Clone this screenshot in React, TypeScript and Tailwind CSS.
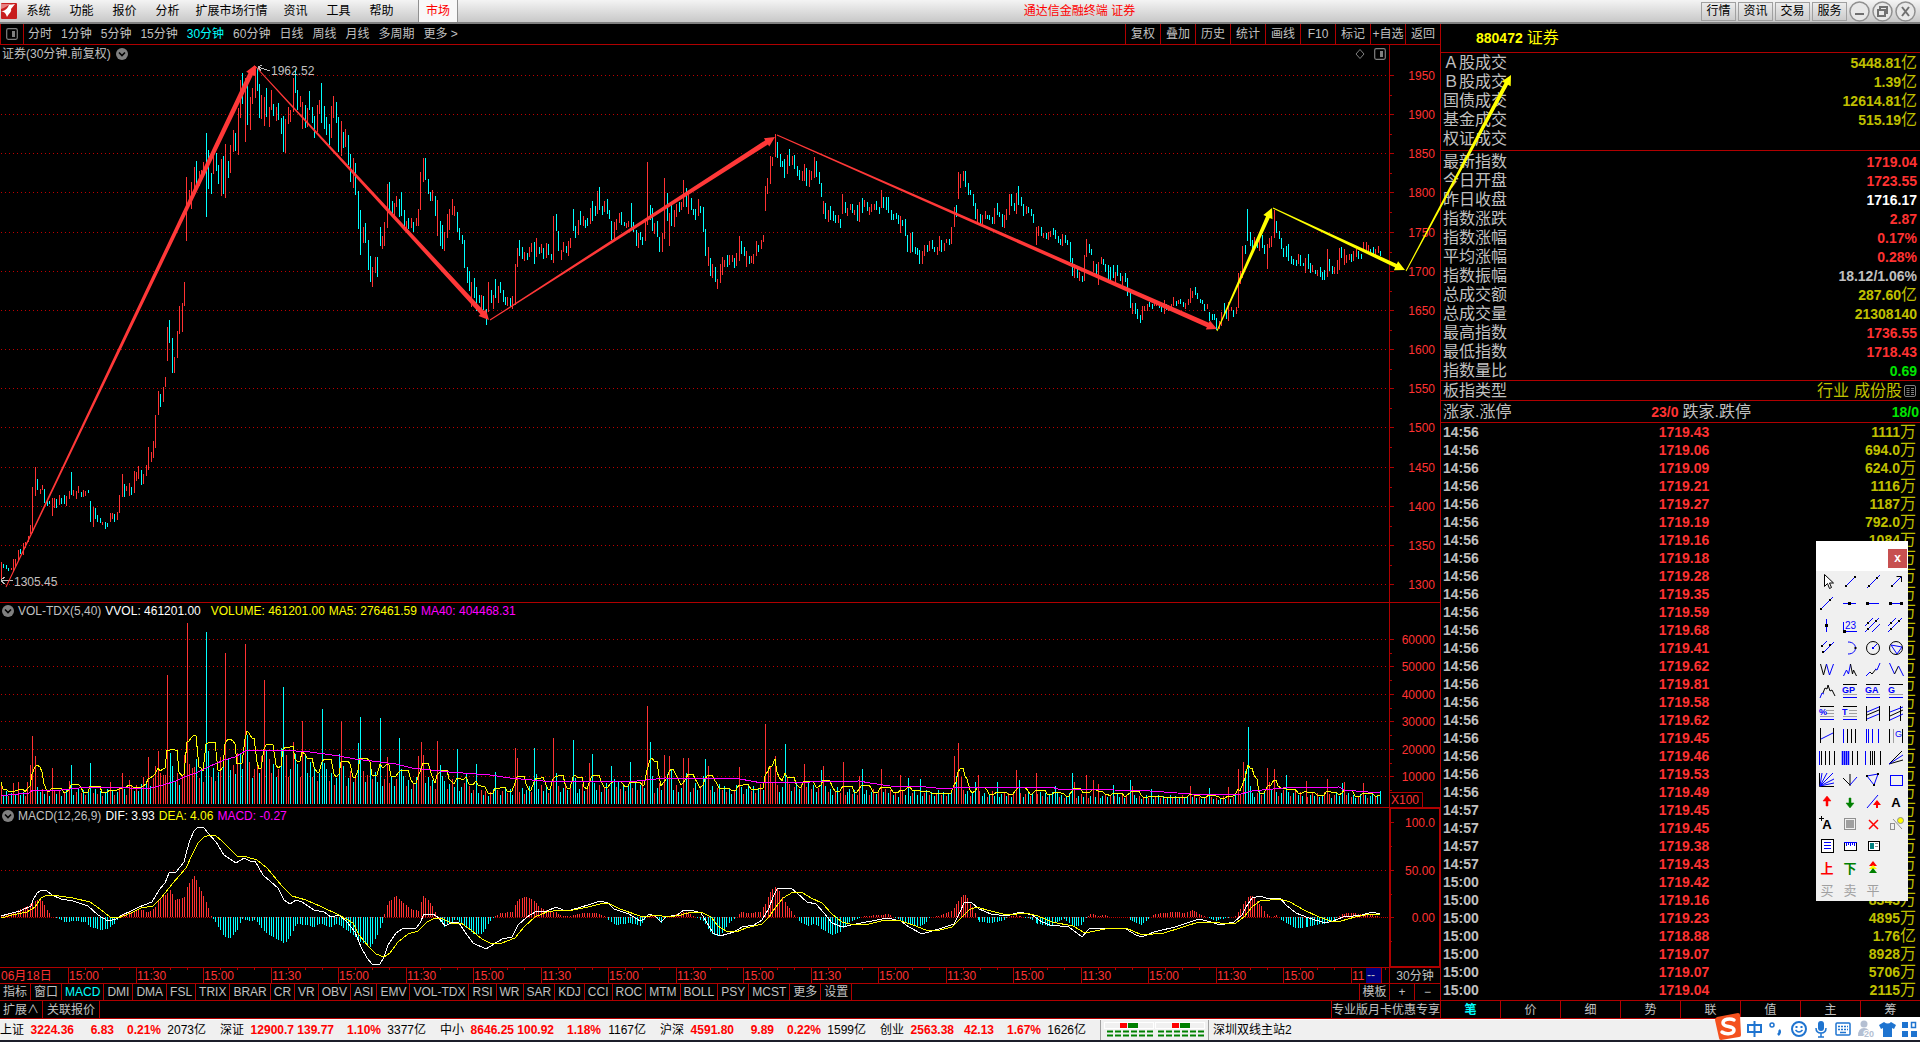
import type { ReactNode } from "react";

type Segment = { from: number; to: number; bars: string };
type Point = [number, number];

const RED = "#ff3232";
const CYAN = "#00ffff";
const LINE = "#b00000";

const menus = ["系统", "功能", "报价", "分析", "扩展市场行情", "资讯", "工具", "帮助"];
const periods = ["分时", "1分钟", "5分钟", "15分钟", "30分钟", "60分钟", "日线", "周线", "月线", "多周期", "更多 >"];
const chartTools = ["复权", "叠加", "历史", "统计", "画线", "F10", "标记", "+自选", "返回"];
const indicators = [
  "指标", "窗口", "MACD", "DMI", "DMA", "FSL", "TRIX", "BRAR", "CR", "VR", "OBV", "ASI", "EMV",
  "VOL-TDX", "RSI", "WR", "SAR", "KDJ", "CCI", "ROC", "MTM", "BOLL", "PSY", "MCST", "更多", "设置",
];
const sideTabs = ["笔", "价", "细", "势", "联", "值", "主", "筹"];

const turnover = [
  ["Ａ股成交", "5448.81亿"],
  ["Ｂ股成交", "1.39亿"],
  ["国债成交", "12614.81亿"],
  ["基金成交", "515.19亿"],
  ["权证成交", ""],
];

const stats = [
  ["最新指数", "1719.04", "text-[#ff3232]"],
  ["今日开盘", "1723.55", "text-[#ff3232]"],
  ["昨日收盘", "1716.17", "text-white"],
  ["指数涨跌", "2.87", "text-[#ff3232]"],
  ["指数涨幅", "0.17%", "text-[#ff3232]"],
  ["平均涨幅", "0.28%", "text-[#ff3232]"],
  ["指数振幅", "18.12/1.06%", "text-[#c0c0c0]"],
  ["总成交额", "287.60亿", "text-[#c0c000]"],
  ["总成交量", "21308140", "text-[#c0c000]"],
  ["最高指数", "1736.55", "text-[#ff3232]"],
  ["最低指数", "1718.43", "text-[#ff3232]"],
  ["指数量比", "0.69", "text-[#00e600]"],
];

const ticks = [
  ["14:56", "1719.43", "1111万"],
  ["14:56", "1719.06", "694.0万"],
  ["14:56", "1719.09", "624.0万"],
  ["14:56", "1719.21", "1116万"],
  ["14:56", "1719.27", "1187万"],
  ["14:56", "1719.19", "792.0万"],
  ["14:56", "1719.16", "1084万"],
  ["14:56", "1719.18", "913.0万"],
  ["14:56", "1719.28", "1042万"],
  ["14:56", "1719.35", "876.0万"],
  ["14:56", "1719.59", "1325万"],
  ["14:56", "1719.68", "1210万"],
  ["14:56", "1719.41", "954.0万"],
  ["14:56", "1719.62", "1093万"],
  ["14:56", "1719.81", "1178万"],
  ["14:56", "1719.58", "883.0万"],
  ["14:56", "1719.62", "902.0万"],
  ["14:56", "1719.45", "1016万"],
  ["14:56", "1719.46", "1254万"],
  ["14:56", "1719.53", "967.0万"],
  ["14:56", "1719.49", "1132万"],
  ["14:57", "1719.45", "1407万"],
  ["14:57", "1719.45", "215.0万"],
  ["14:57", "1719.38", "388.0万"],
  ["14:57", "1719.43", "146.0万"],
  ["15:00", "1719.42", "1562万"],
  ["15:00", "1719.16", "8343万"],
  ["15:00", "1719.23", "4895万"],
  ["15:00", "1718.88", "1.76亿"],
  ["15:00", "1719.07", "8928万"],
  ["15:00", "1719.07", "5706万"],
  ["15:00", "1719.04", "2115万"],
];

const quotes = [
  ["上证", "3224.36", "6.83", "0.21%", "2073亿"],
  ["深证", "12900.7", "139.77", "1.10%", "3377亿"],
  ["中小", "8646.25", "100.92", "1.18%", "1167亿"],
  ["沪深", "4591.80", "9.89", "0.22%", "1599亿"],
  ["创业", "2563.38", "42.13", "1.67%", "1626亿"],
];

// r = rising bar, c = falling bar, then high-low
const candles: Segment[] = [
  {
    from: 1,
    to: 165,
    bars: "r562-581 c564-568 c565-569 c568-571 r568-570 r559-572 r559-567 r550-561 c549-554 r543-555 r542-548 r536-542 r525-534 r487-533 r467-496 c479-490 r489-494 r485-490 c489-503 c501-506 c501-504 r498-516 r498-508 c499-508 r495-505 c498-504 c495-504 r496-506 r491-499 c472-495 r490-496 r491-499 r486-493 c492-497 r490-497 r491-496 c490-493 c501-522 r507-527 c508-519 c515-522 c518-523 r522-525 c522-529 c523-527 r513-522 r513-519 c514-522 r512-520 r495-513 r474-497 c484-497 r486-491 r483-496 c487-495 r471-493 r472-481 r466-479 c470-485 r474-484 r465-476 r447-470 r452-462 r441-458 r415-448 r391-415 c394-407 r387-402 r377-387",
  },
  {
    from: 167,
    to: 257,
    bars: "r327-361 c320-343 c338-373 r357-373 r331-358 r306-334 r303-332 r282-306 r177-241 r190-204 r182-209 r167-193 c161-184 r171-186 r170-180 r162-177 c133-217 c150-189 c173-194 r152-174 c153-171 c165-184 r159-196 c156-194 r144-198 c161-178 r145-173 r130-152 c133-151 r108-155 r80-118 c73-104 r78-142 c83-125 r97-130 r88-104 r66-98 c68-91",
  },
  {
    from: 259,
    to: 355,
    bars: "c84-118 r95-119 r97-126 c88-117 r107-127 r90-110 c104-116 r107-121 c103-120 c118-134 c116-152 r119-153 r107-124 r110-122 r78-112 c69-93 c90-110 r96-107 r102-129 c105-128 r108-127 c91-110 c107-123 c116-138 r105-132 r100-114 c83-123 c106-129 c117-135 c124-145 r106-138 r96-118 c102-123 c117-152 r121-156 c132-148 r129-147 c135-165 c154-182 r158-188 c163-195",
  },
  {
    from: 358,
    to: 454,
    bars: "c191-229 c210-255 r227-243 c223-243 c240-270 c256-282 r267-287 r257-273 c257-277 c227-246 r236-249 r222-246 r184-228 c182-210 c201-214 r203-216 r196-207 c199-217 c192-216 c210-228 r221-230 c218-229 r218-228 c222-232 r218-226 r209-226 r172-210 r158-182 c158-180 c179-194 c192-201 r190-201 c196-216 r200-236 c221-246 c225-249 r232-251 r214-238 r209-230 r199-215 r206-216",
  },
  {
    from: 457,
    to: 553,
    bars: "c212-232 c228-240 c235-244 c240-268 c267-283 c271-291 r282-307 c278-298 c287-311 c295-303 r295-312 c296-310 c309-325 r282-312 c290-303 r295-309 c279-298 r286-303 c282-293 c290-302 c297-305 r297-306 c298-307 r296-309 r264-305 r248-267 c240-256 c247-259 r252-261 c253-260 r247-257 r243-252 c242-264 r238-257 c247-254 r244-253 c248-259 r243-258 c244-255 c254-260 r216-263",
  },
  {
    from: 556,
    to: 638,
    bars: "c214-231 c231-251 r250-260 r242-252 c246-253 r241-256 r238-248 c209-231 c226-238 r220-235 c211-225 r216-226 c220-228 c218-226 r208-224 c201-221 c206-216 r191-214 c187-210 c206-215 r201-212 c199-214 c210-219 c221-240 r222-240 r219-230 r213-223 c212-225 c222-226 r223-228 r221-227 c203-230 c222-232 c230-246 r233-248",
  },
  {
    from: 640,
    to: 763,
    bars: "c232-240 c237-245 r220-241 r162-225 c205-220 c208-231 r223-234 c221-237 c237-252 r233-252 r178-239 c193-221 r213-246 c205-226 r210-227 r204-217 c202-212 r202-210 r180-207 c188-207 r194-214 c198-210 c209-215 c209-220 r199-216 c206-213 c207-232 c229-256 r247-266 c258-276 r264-278 c267-282 r279-289 r264-283 r257-275 r260-267 c255-267 r255-265 r255-262 c258-268 r253-266 r236-261 c241-254 c247-256 r251-267 c256-264 r256-263 r254-264 r241-256 c245-252 r240-249 r235-242",
  },
  {
    from: 765,
    to: 821,
    bars: "r186-211 r178-194 r156-184 r157-166 r134-157 c142-158 c154-167 c161-167 c159-178 r155-174 c149-166 r156-165 c155-169 c166-176 c170-180 r171-181 r164-181 c168-186 r170-187 r171-180 r157-178 c161-177 c172-184 c183-197",
  },
  {
    from: 823,
    to: 898,
    bars: "r201-214 c203-219 r210-222 c206-220 c211-221 c215-223 r215-223 c219-228 r194-214 c202-213 r208-216 r204-210 c204-213 r210-215 c205-221 r202-222 c198-213 r200-207 c202-211 r207-215 r204-212 r204-210 c201-210 c207-214 r190-208 c197-208 c197-210 c197-213 c210-220 c214-220 c213-219 c215-224",
  },
  {
    from: 900,
    to: 956,
    bars: "r216-233 c220-226 c219-236 c235-252 r233-253 c232-252 c247-254 c248-255 c250-264 r251-264 r245-256 c245-252 r241-251 c240-249 c247-252 r247-255 r236-251 c240-252 r243-251 r239-243 c239-245 r227-244 r207-227 c205-217",
  },
  {
    from: 958,
    to: 1033,
    bars: "r172-199 r174-188 r171-181 c171-187 c183-195 c190-195 c194-206 c203-219 r209-223 c214-224 r215-224 r211-219 c215-219 c215-220 c217-224 r208-224 c203-215 c212-217 c214-227 r215-228 r209-220 r194-215 c194-206 c203-211 r193-214 c186-205 c197-206 c204-216 r206-214 c207-213 c209-216 c214-223",
  },
  {
    from: 1036,
    to: 1127,
    bars: "r227-245 r226-236 c227-236 r233-238 c233-239 r232-240 r231-237 c228-235 c230-239 c236-243 c239-245 r234-246 c235-243 c240-245 c242-262 c258-276 r264-278 c267-278 r272-281 c276-282 r255-281 r239-257 c244-253 c249-255 r261-272 c264-274 r262-285 r257-264 c259-265 c264-272 c265-280 c267-280 c265-278 r272-283 c265-276 c273-281 r276-285 c273-282 c278-296",
  },
  {
    from: 1130,
    to: 1238,
    bars: "c293-308 r303-314 c303-314 c309-319 c315-323 r306-320 r306-311 r304-311 c302-307 c304-309 r300-306 r302-306 c302-308 c306-312 r300-314 c304-310 r305-311 r304-308 r297-306 c301-306 r300-304 c299-304 c302-307 r303-309 r299-305 r288-303 r291-298 c287-295 c293-299 c299-303 c300-304 c304-311 r304-309 c312-321 c314-320 c314-320 c318-330 r321-329 r312-326 c303-315 c309-319 r302-321 r307-311 c310-317 r307-314 r273-308",
  },
  {
    from: 1240,
    to: 1380,
    bars: "r271-284 r246-278 c245-254 c209-241 c232-246 c240-250 r237-247 c239-248 r236-251 c235-248 c245-254 r244-269 r238-248 r236-247 r210-238 c221-233 c231-239 c238-249 c248-257 c246-257 c244-261 c256-264 c259-265 c260-266 r254-264 c255-266 c263-266 r258-273 c254-269 c263-273 r265-272 c270-274 r270-276 c267-277 c272-280 c270-280 r249-277 c259-271 c266-274 r267-274 r260-274 r248-270 c247-258 r249-265 r255-263 r254-260 c254-262 r251-261 r249-257 c251-259 c254-259 r242-251 r242-250 r245-252 c249-253 c247-256 r249-255 r246-253 c251-256",
  },
];

// bars above the usual level: colour, x, height
const volumeSpikes =
  "r1:22 r13:21 r18:22 r27:22 r30:39 r32:68 r35:48 c37:17 r52:36 r54:14 r69:23 c71:39 c90:41 r110:22 r122:31 r129:24 r148:47 r155:38 r158:53 r163:29 r167:129 c170:51 c172:38 r184:49 r187:181 r189:40 r192:36 r194:37 c196:45 c206:172 c208:53 r220:47 c223:48 r225:151 c228:45 r233:39 r237:51 c240:51 r245:160 c247:69 r249:42 r257:39 r261:48 r264:124 c266:54 r269:45 c281:56 c283:117 r286:49 r293:62 c295:50 r302:83 c305:48 c310:42 c322:95 c324:41 c339:50 r341:83 c343:38 c358:61 c360:87 c370:37 c380:86 r387:47 c399:66 c401:35 r418:48 r421:62 r423:49 r437:63 c440:39 c442:28 c457:55 c466:31 c476:40 c495:32 r515:56 r517:46 c534:56 c536:30 r553:66 c556:31 c573:64 c575:26 r589:41 c592:50 c611:38 c614:25 c630:42 r647:98 c650:62 c652:28 r664:49 c667:30 r669:48 c671:34 r683:46 c686:31 r688:46 c703:28 c705:45 r708:38 r739:37 r765:80 r768:37 r770:37 r775:48 c785:60 r787:26 r804:40 c821:34 r823:38 r843:42 r859:28 c862:35 r881:35 r900:29 c908:26 c920:25 r954:48 c956:28 r958:61 r961:27 c975:22 r978:29 c997:22 r1016:34 c1019:24 r1036:31 c1055:18 c1072:31 r1074:22 r1086:29 r1093:24 r1098:20 c1113:19 c1130:24 r1132:18 c1151:15 r1190:18 c1209:16 r1228:17 r1238:35 r1241:27 r1243:42 c1245:33 c1248:77 c1250:18 r1267:36 r1269:22 r1274:35 c1286:29 r1306:23 r1327:25 c1342:21 r1344:22 r1363:21 c1380:13";

const ma40: Point[] = [
  [1, 795], [8, 795], [29, 793], [33, 790], [61, 790], [88, 787], [127, 787], [133, 789], [151, 788], [163, 785],
  [176, 781], [184, 777], [196, 773], [208, 767], [224, 760], [235, 757], [247, 750], [282, 750], [310, 752],
  [339, 756], [355, 759], [380, 762], [396, 764], [412, 768], [449, 772], [490, 775], [510, 778], [543, 781],
  [567, 782], [596, 781], [637, 781], [665, 778], [740, 779], [762, 783], [859, 781], [870, 783], [890, 786],
  [926, 787], [946, 789], [961, 787], [1051, 787], [1058, 789], [1099, 789], [1114, 790], [1150, 791],
  [1191, 794], [1237, 795], [1252, 791], [1283, 788], [1339, 787], [1344, 790], [1380, 793],
];

const dif =
  "1,916 8,914 20,911 31,906 33,900 37,893 42,890 47,891 52,895 61,899 73,901 88,906 98,915 108,921 116,919 122,915 131,911 139,907 152,902 159,890 165,883 169,873 176,872 184,862 187,850 190,840 194,831 198,827 204,828 208,833 216,842 224,855 236,863 244,858 250,861 255,861 263,875 278,888 284,900 290,904 296,900 302,902 314,910 324,912 331,917 339,915 347,922 355,932 361,947 367,958 372,964 380,964 384,957 388,945 396,933 402,929 416,928 420,923 424,914 433,914 439,918 445,926 453,922 459,923 465,932 473,943 486,949 494,944 502,939 512,937 518,925 527,917 535,912 547,911 556,907 563,910 571,910 588,905 600,901 608,903 614,909 629,914 640,921 644,919 649,914 655,916 661,922 666,917 677,915 684,910 691,910 701,913 709,926 713,933 720,936 734,932 742,927 754,925 762,920 769,908 773,897 777,889 783,888 791,888 797,893 807,902 816,904 824,913 832,923 842,927 856,924 877,920 887,918 901,921 909,927 922,934 942,928 954,924 960,912 964,903 971,902 979,909 991,914 1007,916 1020,912 1032,915 1042,922 1050,925 1069,927 1082,937 1089,929 1103,928 1126,929 1136,935 1142,937 1154,932 1175,927 1199,919 1211,922 1220,925 1234,922 1242,915 1246,907 1252,898 1260,896 1269,899 1280,898 1286,905 1296,913 1309,918 1325,923 1333,921 1343,917 1353,916 1362,915 1372,912 1380,914";
const dea =
  "1,918 12,915 27,912 35,907 41,898 47,895 59,896 73,898 90,902 100,909 110,917 118,918 131,913 141,908 153,906 161,898 173,883 186,868 192,855 198,843 204,837 210,835 216,836 222,841 231,850 237,856 247,857 257,860 267,868 282,886 292,896 306,900 322,907 339,915 353,923 359,935 369,947 376,954 384,957 390,953 398,942 408,934 418,931 427,922 435,918 443,919 451,923 461,923 471,930 482,939 492,944 502,943 515,938 524,927 535,917 547,912 559,910 573,910 588,907 604,903 610,904 620,909 640,916 646,917 654,915 669,917 681,915 691,912 703,913 711,917 718,926 726,931 736,932 746,928 762,924 769,917 775,908 783,898 793,892 803,893 811,898 822,903 832,914 842,922 850,924 869,924 885,920 901,921 913,925 926,930 940,930 952,927 960,919 969,910 976,907 991,911 1007,915 1026,913 1038,916 1052,922 1073,926 1085,933 1105,929 1126,928 1142,935 1164,933 1183,927 1199,922 1220,923 1236,923 1244,917 1252,907 1260,901 1280,899 1290,902 1304,910 1319,917 1331,921 1341,921 1355,917 1370,914 1380,914";
const macdShape =
  "1,2 14,5 31,13 38,18 42,16 46,8 50,2 52,0 56,-1 64,-5 75,-4 85,-5 90,-10 100,-13 108,-12 116,-5 119,1 127,4 139,8 147,5 154,8 159,18 165,22 170,27 175,17 184,20 188,33 194,41 199,30 206,15 210,3 213,-2 218,-10 224,-20 230,-21 237,-13 242,-2 250,-4 256,-3 262,-13 272,-20 282,-25 285,-27 291,-18 296,-7 305,-8 314,-10 320,-6 330,-11 337,-6 344,-12 352,-17 360,-25 370,-30 376,-20 382,-6 384,3 388,15 396,21 402,15 410,8 418,6 423,21 429,16 435,5 440,-5 444,-10 450,-6 456,-2 464,-9 474,-18 482,-17 490,-4 494,0 499,4 512,5 518,18 525,20 533,17 540,9 550,5 556,5 561,1 570,1 582,4 596,4 605,1 610,-5 616,-8 630,-6 640,-9 645,-2 649,3 655,0 661,-6 666,0 677,3 685,5 691,2 697,-1 704,-5 710,-15 716,-20 722,-16 728,-7 735,-1 741,5 750,4 760,5 766,15 771,27 776,31 781,22 787,11 795,1 800,-5 807,-9 815,-7 824,-14 833,-18 840,-15 848,-5 857,-2 864,1 880,2 887,3 895,-1 905,-6 917,-10 924,-7 929,-1 940,2 952,6 958,16 964,23 968,17 974,6 979,-5 990,-6 1002,-4 1008,0 1015,2 1022,0 1030,-2 1037,-7 1050,-9 1057,-5 1064,-2 1072,-9 1080,-9 1085,-2 1091,4 1097,1 1105,2 1111,0 1126,0 1133,-5 1141,-8 1147,-3 1155,3 1173,5 1185,4 1193,7 1200,2 1207,0 1215,-4 1225,-1 1234,0 1240,8 1246,18 1251,22 1257,16 1265,5 1270,0 1276,2 1280,-3 1286,-6 1294,-11 1303,-11 1315,-8 1328,-6 1335,-2 1341,3 1350,4 1360,3 1370,3 1375,1 1380,0";

const toPoints = (s: string) => s.split(" ").map((p) => p.split(",").map(Number) as Point);

const valueAt = (points: Point[], x: number) => {
  for (let i = 1; i < points.length; i++) {
    const [x0, y0] = points[i - 1];
    const [x1, y1] = points[i];
    if (x <= x1) return y0 + ((y1 - y0) * Math.max(0, x - x0)) / (x1 - x0);
  }
  return points[points.length - 1][1];
};

const usualVolume: Point[] = [
  [0, 10], [40, 12], [60, 11], [130, 13], [150, 24], [170, 28], [240, 33], [310, 30], [370, 25],
  [450, 20], [480, 12], [520, 14], [640, 18], [720, 15], [800, 17], [850, 12], [1000, 10], [1100, 8],
  [1220, 6], [1260, 11], [1310, 10], [1380, 7],
];

const BAR_STEP = 2.41;
const BAR_COUNT = 573;

const volumes = Array.from({ length: BAR_COUNT }, (_, i) => {
  const x = Math.round(1 + i * BAR_STEP);
  const noise = ((i * 7919) % 101) / 101;
  return {
    x,
    h: Math.round(valueAt(usualVolume, x) * (0.65 + noise * 0.7)),
    color: (i * 31) % 7 < 3 ? RED : CYAN,
  };
});
volumeSpikes.split(" ").forEach((s) => {
  const [x, h] = s.slice(1).split(":").map(Number);
  const bar = volumes[Math.min(BAR_COUNT - 1, Math.round((x - 1) / BAR_STEP))];
  bar.x = x;
  bar.h = h;
  bar.color = s[0] === "r" ? RED : CYAN;
});

const ma5 = volumes.map((v, i) => {
  const part = volumes.slice(Math.max(0, i - 4), i + 1);
  const mean = part.reduce((sum, p) => sum + p.h, 0) / part.length;
  return `${v.x},${Math.round(804 - mean)}`;
});

const priceLevels = Array.from({ length: 14 }, (_, i) => ({ label: 1950 - i * 50, y: Math.round(75 + i * 39.15) }));
const volumeLevels = [60000, 50000, 40000, 30000, 20000, 10000].map((label, i) => ({
  label,
  y: Math.round(639 + i * 27.4),
}));
const timeMarks = Array.from({ length: 20 }, (_, i) => ({
  label: i === 19 ? "11" : i % 2 === 0 ? "15:00" : "11:30",
  x: Math.round(68 + i * 67.5),
}));

function GridLine({ y }: { y: number }) {
  return <line x1="1" x2="1389" y1={y + 0.5} y2={y + 0.5} stroke="#c00000" strokeDasharray="1 3" />;
}

function PriceChart() {
  return (
    <svg className="block h-[539px] w-full" viewBox="0 63 1389 539" preserveAspectRatio="none" shapeRendering="crispEdges">
      {priceLevels.map((l) => (
        <GridLine key={l.label} y={l.y} />
      ))}
      {candles.map((seg) => {
        const bars = seg.bars.split(" ");
        return bars.map((b, i) => {
          const [high, low] = b.slice(1).split("-").map(Number);
          const x = Math.round(seg.from + ((seg.to - seg.from) * i) / (bars.length - 1));
          return <rect key={`${seg.from}-${i}`} x={x} y={high} width="1" height={low - high} fill={b[0] === "r" ? RED : CYAN} />;
        });
      })}
      <g fill="none" stroke="#c0c0c0">
        <path d="M258 67l12 4M258 67l4-2M258 67l3 4" />
        <path d="M1 580.5h12M1 580l4-3M1 581l4 3" />
      </g>
      <g fill="#c0c0c0" fontSize="12">
        <text x="271" y="75">1962.52</text>
        <text x="14" y="586">1305.45</text>
      </g>
    </svg>
  );
}

function VolumeChart() {
  return (
    <svg className="block h-[186px] w-full" viewBox="0 621 1389 186" preserveAspectRatio="none" shapeRendering="crispEdges">
      {volumeLevels.map((l) => (
        <GridLine key={l.label} y={l.y} />
      ))}
      {volumes.map((v, i) => (
        <rect key={i} x={v.x} y={804 - v.h} width="1" height={v.h} fill={v.color} />
      ))}
      <polyline points={ma5.join(" ")} fill="none" stroke="#ffff00" />
      <polyline points={ma40.join(" ")} fill="none" stroke="#ff00ff" />
    </svg>
  );
}

function MacdChart() {
  const shape = toPoints(macdShape);
  return (
    <svg className="block h-[141px] w-full" viewBox="0 826 1389 141" preserveAspectRatio="none" shapeRendering="crispEdges">
      <GridLine y={870} />
      <line x1="1" x2="1389" y1="917.5" y2="917.5" stroke="#c00000" strokeDasharray="1 1" />
      {volumes.map(({ x }, i) => {
        const h = Math.round(valueAt(shape, x));
        if (h === 0) return null;
        return <rect key={i} x={x} y={h > 0 ? 917 - h : 917} width="1" height={Math.abs(h)} fill={h > 0 ? RED : CYAN} />;
      })}
      <polyline points={dif} fill="none" stroke="#ffffff" />
      <polyline points={dea} fill="none" stroke="#ffff00" />
    </svg>
  );
}

function PriceAxis() {
  return (
    <svg className="block h-[557px] w-[50px]" viewBox="0 45 50 557">
      {priceLevels.map((l) => (
        <g key={l.label}>
          <path d={`M0 ${l.y + 0.5}h4M0 ${l.y + 20.5}h2`} stroke={LINE} />
          <text x="45" y={l.y + 5} fontSize="12" textAnchor="end" fill={RED}>{l.label}</text>
        </g>
      ))}
    </svg>
  );
}

function VolumeAxis() {
  return (
    <svg className="block h-[204px] w-[50px]" viewBox="0 603 50 204">
      {volumeLevels.map((l) => (
        <g key={l.label}>
          <path d={`M0 ${l.y + 0.5}h4M0 ${l.y + 14.5}h2`} stroke={LINE} />
          <text x="45" y={l.y + 5} fontSize="12" textAnchor="end" fill={RED}>{l.label}</text>
        </g>
      ))}
      <path d="M0 792.5h32.5V807" fill="none" stroke={LINE} />
      <text x="1" y="804" fontSize="12" fill={RED}>X100</text>
    </svg>
  );
}

function MacdAxis() {
  return (
    <svg className="block h-[159px] w-[50px]" viewBox="0 808 50 159">
      <rect x="0.5" y="808.5" width="49" height="158" fill="none" stroke={LINE} />
      {[["100.0", 822], ["50.00", 870], ["0.00", 917]].map(([label, y]) => (
        <g key={label}>
          <path d={`M0 ${Number(y) + 0.5}h4M0 ${Number(y) + 24.5}h2`} stroke={LINE} />
          <text x="45" y={Number(y) + 5} fontSize="12" textAnchor="end" fill={RED}>{label}</text>
        </g>
      ))}
    </svg>
  );
}

function Chevron() {
  return (
    <svg className="size-3" viewBox="0 0 12 12">
      <circle cx="6" cy="6" r="6" fill="#808080" />
      <path d="M3 4.5l3 3 3-3" fill="none" stroke="#000" strokeWidth="1.6" />
    </svg>
  );
}

function PanelIcon() {
  return (
    <svg className="size-3" viewBox="0 0 12 12">
      <rect x="0.7" y="0.7" width="10.6" height="10.6" rx="1.5" fill="none" stroke="#808080" strokeWidth="1.2" />
      <rect x="6" y="3" width="3" height="6" fill="#808080" />
    </svg>
  );
}

// trend arrow that widens towards its head
function Arrow({ from, to, color, width }: { from: Point; to: Point; color: string; width: number }) {
  const dx = to[0] - from[0];
  const dy = to[1] - from[1];
  const len = Math.hypot(dx, dy);
  const [ux, uy] = [dx / len, dy / len];
  const at = (along: number, side: number) => `${from[0] + ux * along - uy * side},${from[1] + uy * along + ux * side}`;
  const neck = len - 10;
  return (
    <polygon
      fill={color}
      points={[
        at(0, 0.5), at(neck, width / 2), at(neck, 5), at(len, 0),
        at(neck, -5), at(neck, -width / 2), at(0, -0.5),
      ].join(" ")}
    />
  );
}

function TrendArrows() {
  return (
    <svg className="pointer-events-none absolute inset-x-0 top-0 h-[602px] w-full" viewBox="0 0 1920 602" preserveAspectRatio="none">
      <Arrow from={[6, 587]} to={[255, 65]} color="#ff3838" width={5} />
      <Arrow from={[256, 67]} to={[489, 320]} color="#ff3838" width={5} />
      <Arrow from={[490, 320]} to={[775, 137]} color="#ff3838" width={5} />
      <Arrow from={[777, 135]} to={[1217, 329]} color="#ff3838" width={5} />
      <Arrow from={[1217, 331]} to={[1272, 208]} color="#ffff00" width={4} />
      <Arrow from={[1273, 208]} to={[1405, 270]} color="#ffff00" width={4} />
      <Arrow from={[1406, 271]} to={[1511, 75]} color="#ffff00" width={4} />
    </svg>
  );
}

function Dot({ x, y, size = 2 }: { x: number; y: number; size?: number }) {
  return <rect x={x - size / 2} y={y - size / 2} width={size} height={size} fill="#000" stroke="none" />;
}

function LevelLines({ text, short = false }: { text: string; short?: boolean }) {
  return (
    <>
      <path d="M4 3.5h14" stroke="#000" />
      <path d="M4 16.5h14" />
      <path d={short ? "M10 7.5h8M10 10.5h8M4 13.5h14" : "M4 13.5h14"} stroke="#a0a0a0" />
      <text x="3" y="12" fontSize="9" fontWeight="bold" fill="#00f" stroke="none">{text}</text>
    </>
  );
}

function Glyph({ text, color, bold = false }: { text: string; color: string; bold?: boolean }) {
  return (
    <text x="11" y="16" fontSize="13" textAnchor="middle" fontWeight={bold ? "bold" : "normal"} fill={color} stroke="none">
      {text}
    </text>
  );
}

const tools: { name: string; icon: ReactNode }[] = [
  { name: "选择", icon: <path d="M8.5 3.5v12l3-3 2 5 2-1-2-4.5h4z" fill="#fff" stroke="#000" /> },
  { name: "线段", icon: <><path d="M7 15l9-9" /><Dot x={7} y={15} /><Dot x={16} y={6} /></> },
  { name: "直线", icon: <><path d="M5 17L18 4" /><Dot x={7} y={15} /><Dot x={15} y={7} /></> },
  { name: "箭头", icon: <><path d="M7 15l9-9" /><path d="M11.5 5.5h5V11" stroke="#000" /><Dot x={7} y={15} /></> },
  { name: "射线", icon: <><path d="M5 16L17 4" /><Dot x={5} y={16} /><Dot x={14} y={7} /></> },
  { name: "水平直线", icon: <><path d="M4 10.5h13" /><Dot x={10.5} y={10.5} size={3} /></> },
  { name: "水平射线", icon: <><path d="M5 10.5h12" /><Dot x={5.5} y={10.5} size={3} /></> },
  { name: "水平线段", icon: <><path d="M5 10.5h12" /><Dot x={5.5} y={10.5} size={3} /><Dot x={16.5} y={10.5} size={3} /></> },
  { name: "垂直线", icon: <><path d="M10.5 4v13" /><Dot x={10.5} y={10.5} size={3} /></> },
  {
    name: "价格标注",
    icon: <><path d="M4.5 7v9.5H18" /><text x="6" y="14" fontSize="10" fill="#00f" stroke="none">23</text><Dot x={5.5} y={16.5} size={3} /></>,
  },
  { name: "平行线", icon: <><path d="M3 11l8-8M3 17L17 3M10 17l8-8" /><Dot x={6} y={8} /><Dot x={14} y={6} /><Dot x={6} y={14} /></> },
  { name: "通道线", icon: <><path d="M3 11l8-8M3 17L17 3" /><Dot x={6} y={8} /><Dot x={14} y={6} /><Dot x={6} y={14} /></> },
  { name: "平行线段", icon: <><path d="M6 9l5-5M7 16L18 5" /><Dot x={6} y={9} /><Dot x={7} y={15} /><Dot x={14} y={8} /></> },
  { name: "圆弧", icon: <><path d="M9 5c10 0 10 12 0 12" /><Dot x={16.5} y={11} /></> },
  { name: "圆", icon: <><circle cx="11" cy="11" r="6.5" fill="none" stroke="#000" /><path d="M11 11l4-4" /><path d="M10 12h2v-2h-2z" fill="#00f" stroke="none" /></> },
  { name: "外接圆", icon: <><circle cx="11" cy="11" r="6.5" fill="none" stroke="#000" /><path d="M6 8l11 2-5 7z" /></> },
  { name: "W浪", icon: <><path d="M4.5 5l3 11 3-11" stroke="#000" /><path d="M10.5 5l3 11 4-11" /></> },
  { name: "三浪", icon: <><path d="M4.5 17l3-6 2 4 2-10" /><path d="M11.5 5l2 10 1-4 3 6" stroke="#000" /></> },
  { name: "上升浪", icon: <><path d="M4 17l4-4" /><path d="M8 13l2 2 4-5" stroke="#000" /><path d="M13 10l2 1 3-7" /></> },
  { name: "下降浪", icon: <><path d="M4.5 4l5 11" /><path d="M9.5 15l4-8" stroke="#000" /><path d="M13.5 7l5 10" /></> },
  { name: "八浪", icon: <><path d="M4 17l2-5 2 1" /><path d="M7 12l2-5 2 1 1-4 2 6 2-1 3 6" stroke="#000" /></> },
  { name: "黄金价位", icon: <LevelLines text="GP" /> },
  { name: "黄金目标", icon: <LevelLines text="GA" /> },
  { name: "黄金分割", icon: <LevelLines text="G" /> },
  { name: "百分比", icon: <LevelLines text="%" short /> },
  { name: "波段线", icon: <LevelLines text="T" short /> },
  { name: "线性回归", icon: <><path d="M4.5 3v15M17.5 3v15" stroke="#000" /><path d="M5 9l12-5M5 16l12-5" /><path d="M5 12l12-5" stroke="#000" /></> },
  { name: "延长回归", icon: <><path d="M4.5 3v15M15.5 3v15" stroke="#000" /><path d="M5 9l13-5M5 17l13-6" /><path d="M5 13l13-6" stroke="#000" /></> },
  { name: "回归线", icon: <><path d="M4.5 3v15M17.5 3v15" stroke="#000" /><path d="M5 14l12-6" /></> },
  { name: "周期线", icon: <><path d="M4.5 4v14" /><path d="M8.5 4v14M12.5 4v14M16.5 4v14" stroke="#000" /></> },
  { name: "斐波周期", icon: <path d="M4.5 4v14M6.5 4v14M10.5 4v14M16.5 4v14" /> },
  {
    name: "黄金周期",
    icon: <><path d="M4.5 4v14M17.5 4v14" stroke="#000" /><path d="M8.5 4v14" stroke="#a0a0a0" /><text x="10" y="12" fontSize="9" fill="#00f" stroke="none">G</text></>,
  },
  { name: "阻速周期", icon: <><path d="M3.5 4v14" /><path d="M5.5 4v14M9.5 4v14M13.5 4v14M18.5 4v14" stroke="#000" /></> },
  { name: "密集周期", icon: <><path d="M3.5 4v14M5.5 4v14M7.5 4v14M9.5 4v14" strokeWidth="1.5" /><path d="M13.5 4v14M18.5 4v14" stroke="#000" /></> },
  { name: "对称周期", icon: <><path d="M3.5 4v14" /><path d="M8.5 4v14M10.5 4v14M12.5 4v14M18.5 4v14" stroke="#000" /></> },
  { name: "阻速线", icon: <><path d="M4 17L17 4M4 17l14-4" stroke="#000" /><path d="M4 17l14-9" /></> },
  { name: "甘氏线", icon: <><path d="M3.5 4v13.5H18" stroke="#000" /><path d="M4 17L6 4M4 17l7-13M4 17L17 4M4 17l14-7M4 17l14-3" /></> },
  { name: "分叉线", icon: <><path d="M11 5v12M4 9l7 7" stroke="#000" /><path d="M11 16l7-8" /></> },
  { name: "三角形", icon: <><path d="M5 7l11-2-4 11z" /><Dot x={5} y={7} /><Dot x={16} y={5} /><Dot x={12} y={16} /></> },
  { name: "矩形", icon: <rect x="5.5" y="6.5" width="12" height="10" fill="none" /> },
  { name: "上涨标记", icon: <path d="M11 5l4 5h-3v5h-2v-5H7z" fill="#f00" stroke="#f00" strokeWidth="0.5" /> },
  { name: "下跌标记", icon: <path d="M11 17l4-5h-3V7h-2v5H7z" fill="#008000" stroke="#008000" strokeWidth="0.5" /> },
  { name: "涨跌标记", icon: <><path d="M5 17L16 4" /><path d="M15 9l4 5h-3v3h-2v-3h-3z" fill="#f00" stroke="none" /></> },
  { name: "文字", icon: <Glyph text="A" color="#000" bold /> },
  { name: "锚定文字", icon: <><Glyph text="A" color="#000" bold /><path d="M3 5.5h5M5.5 3v5" stroke="#000" /></> },
  { name: "隐藏", icon: <><rect x="5.5" y="5.5" width="11" height="11" fill="none" stroke="#909090" /><rect x="7" y="7" width="8" height="8" fill="#a0a0a0" stroke="none" /></> },
  { name: "删除", icon: <path d="M7 7l9 9M16 7l-9 9" stroke="#f00" strokeWidth="1.5" /> },
  {
    name: "全部删除",
    icon: <><rect x="5.5" y="10.5" width="4" height="6" fill="none" stroke="#909090" /><path d="M8 6l9 10" stroke="#909090" /><circle cx="15.5" cy="7.5" r="3" fill="#ff0" stroke="#909090" /></>,
  },
  { name: "画线管理", icon: <><rect x="5.5" y="4.5" width="12" height="13" fill="#fff" stroke="#000" /><path d="M8 7.5h7M8 10.5h7M8 13.5h7" /></> },
  { name: "尺子", icon: <><rect x="5.5" y="7.5" width="12" height="8" fill="#fff" stroke="#000" /><path d="M5 7.5h13M7.5 8v3M9.5 8v2M11.5 8v3M13.5 8v2M15.5 8v3" /></> },
  { name: "截图", icon: <><rect x="6.5" y="6.5" width="11" height="9" fill="#fff" stroke="#000" /><rect x="8" y="8" width="4" height="6" fill="#008080" stroke="none" /><path d="M13 8.5h3M13 11.5h3" stroke="#909090" /></> },
  { name: "", icon: null },
  { name: "上标", icon: <Glyph text="上" color="#f00" bold /> },
  { name: "下标", icon: <Glyph text="下" color="#008000" bold /> },
  { name: "涨跌", icon: <><path d="M11 4l4 5H7z" fill="#f00" stroke="none" /><path d="M11 8l4 4H7z" fill="#ff0" stroke="none" /><path d="M11 11l4 5H7z" fill="#008000" stroke="none" /></> },
  { name: "", icon: null },
  { name: "买", icon: <Glyph text="买" color="#a0a0a0" /> },
  { name: "卖", icon: <Glyph text="卖" color="#a0a0a0" /> },
  { name: "平", icon: <Glyph text="平" color="#a0a0a0" /> },
];

function DrawingTools() {
  return (
    <div className="absolute top-[541px] right-3 h-[360px] w-[92px] bg-[#f0f0f0]">
      <div className="flex h-[30px] items-center justify-end bg-white pt-2 pr-px pb-1">
        <button aria-label="关闭" className="flex size-[19px] items-center justify-center bg-[#c75050] text-xs leading-none font-bold text-white">
          x
        </button>
      </div>
      <div className="grid grid-cols-4">
        {tools.map((t, i) =>
          t.icon ? (
            <button key={i} aria-label={t.name} className="h-[22px]">
              <svg className="block size-[22px]" viewBox="0 0 22 22" fill="none" stroke="#0000ff">
                {t.icon}
              </svg>
            </button>
          ) : (
            <span key={i} />
          ),
        )}
      </div>
    </div>
  );
}

function ImeBar() {
  return (
    <div className="absolute right-0 bottom-[2px] flex h-[23px] w-[198px] items-center bg-white text-[#1f74d0]">
      <svg className="absolute -left-2 bottom-0 h-7 w-7" viewBox="0 0 28 28">
        <path d="M3 5L24 1q2 0 2 2l1 20q0 2-2 2L7 28q-2 0-2-2L1 8q0-2 2-3z" fill="#f4511e" />
        <path d="M20 8c-4-2-11-1-11 3 0 5 11 2 11 7 0 4-8 5-12 2" fill="none" stroke="#fff" strokeWidth="3.5" strokeLinecap="round" />
      </svg>
      <svg className="block h-[22px] w-full" viewBox="0 0 198 22" fill="none" stroke="#1f74d0" strokeWidth="2">
        <path d="M26 7h13v7H26zM32.5 3v16" />
        <circle cx="50" cy="7" r="2" strokeWidth="1.5" />
        <path d="M57 12q2 2-1 5" strokeWidth="2.5" />
        <circle cx="77" cy="11" r="7" />
        <path d="M73.5 12q3.5 4 7 0" strokeWidth="1.5" />
        <path d="M74.5 8v2M79.5 8v2" />
        <rect x="96" y="3" width="6" height="10" rx="3" fill="#1f74d0" stroke="none" />
        <path d="M94 10q0 5 5 5t5-5M99 15v4M96 19h6" strokeWidth="1.5" />
        <rect x="114" y="5" width="14" height="12" rx="1" strokeWidth="1.5" />
        <path d="M116 8.5h10M116 11.5h10" strokeDasharray="2 1" strokeWidth="1.5" />
        <path d="M118 14.5h6" strokeWidth="1.5" />
        <g fill="#b4bfd2" stroke="none">
          <circle cx="142" cy="6" r="3.5" />
          <path d="M136 18q0-8 6-8t6 8z" />
          <text x="142" y="19" fontSize="9" fontWeight="bold" stroke="#fff" strokeWidth="2" paintOrder="stroke">20</text>
        </g>
        <path d="M162 4l-5 3 2 4 2-1v9h9v-9l2 1 2-4-5-3q-3 3-7 0z" fill="#1f74d0" stroke="none" />
        <path d="M180 4h6v6h-6zM180 13h6v6h-6zM189 13h6v6h-6z" fill="#1f74d0" stroke="none" />
        <path d="M189.5 4.5h4v5h-4z" strokeWidth="1.5" />
      </svg>
    </div>
  );
}

// numbers are bold 14px, a trailing unit is a plain 16px character
function Amount({ value }: { value: string }) {
  const unit = /[亿万]$/.test(value) ? value.slice(-1) : "";
  const digits = unit ? value.slice(0, -1) : value;
  return (
    <>
      <span className="text-sm font-bold">{digits}</span>
      {unit && <span className="text-base">{unit}</span>}
    </>
  );
}

function QuoteRow({ label, value, color }: { label: string; value: string; color: string }) {
  return (
    <tr className="h-[19px]">
      <th scope="row" className="p-0 text-left font-normal">
        <div className="flex h-[19px] items-center pl-[2px] text-base leading-none">{label}</div>
      </th>
      <td className={`p-0 ${color}`}>
        <div className="flex h-[19px] items-center justify-end pr-[3px] leading-none">
          <Amount value={value} />
        </div>
      </td>
    </tr>
  );
}

function Sidebar() {
  return (
    <aside className="flex w-1/4 shrink-0 flex-col border-l border-[#b00000] leading-none">
      <h1 className="flex h-[28px] items-center gap-1 pl-[35px] text-[#ffff00]">
        <span className="text-sm font-bold">880472</span>
        <span className="text-base">证券</span>
      </h1>
      <div className="h-[98px] border-t border-[#b00000]">
        <table className="w-full border-collapse">
          <tbody>
            {turnover.map(([label, value]) => (
              <QuoteRow key={label} label={label} value={value} color="text-[#c0c000]" />
            ))}
          </tbody>
        </table>
      </div>
      <div className="h-[230px] border-t border-[#b00000] pt-px">
        <table className="w-full border-collapse">
          <tbody>
            {stats.map(([label, value, color]) => (
              <QuoteRow key={label} label={label} value={value} color={color} />
            ))}
          </tbody>
        </table>
      </div>
      <div className="flex h-5 items-center justify-between border-t border-[#b00000] pr-1 pl-[2px] text-base leading-none">
        <span>板指类型</span>
        <span className="flex items-center gap-[2px] text-[#c0c000]">
          <a href="#industry">行业</a>
          <a href="#members" className="ml-[3px]">成份股</a>
          <svg className="size-3" viewBox="0 0 12 12" fill="none" stroke="#808080">
            <rect x="0.5" y="0.5" width="11" height="11" rx="1.5" />
            <path d="M2.5 3.5h3M2.5 5.5h3M2.5 7.5h3M2.5 9.5h3M7 3.5h3M7 5.5h3M7 7.5h3M7 9.5h3" />
          </svg>
        </span>
      </div>
      <div className="grid h-[22px] grid-cols-2 items-center border-t border-[#b00000] text-base leading-none">
        <div className="flex items-center justify-between pl-[2px]">
          <span>涨家.涨停</span>
          <span className="pr-[2px] text-sm font-bold text-[#ff3232]">23/0</span>
        </div>
        <div className="flex items-center justify-between pr-px pl-[2px]">
          <span>跌家.跌停</span>
          <span className="text-sm font-bold text-[#00e600]">18/0</span>
        </div>
      </div>
      <div className="flex-1 border-t border-[#b00000]">
        <table className="w-full table-fixed border-collapse">
          <tbody>
            {ticks.map(([time, price, amount], i) => (
              <tr key={i} className="h-[18px]">
                <td className="w-1/4 p-0 pl-[2px] text-sm leading-[18px] font-bold">{time}</td>
                <td className="w-[31%] p-0 text-right text-sm leading-[18px] font-bold text-[#ff3232]">{price}</td>
                <td className="p-0 text-[#c0c000]">
                  <div className="flex h-[18px] items-center justify-end pr-1 leading-none">
                    <Amount value={amount} />
                  </div>
                </td>
              </tr>
            ))}
          </tbody>
        </table>
      </div>
      <div className="flex h-[18px] border-t border-[#b00000]">
        {sideTabs.map((tab, i) => (
          <button
            key={tab}
            className={`flex-1 border-r border-[#b00000] text-xs leading-none last:border-r-0 ${i === 0 ? "font-bold text-[#00ffff]" : ""}`}
          >
            {tab}
          </button>
        ))}
      </div>
    </aside>
  );
}

function TopBar() {
  return (
    <header className="flex h-6 items-center border-b-2 border-[#808080] bg-linear-to-b from-[#f4f4f4] to-[#c8c8c8] text-xs text-black">
      <svg className="h-4 w-[17px]" viewBox="0 0 17 16">
        <rect x="1" width="16" height="16" rx="1" fill="#c81e1e" />
        <path d="M1 1h11c-4 1-7 4-11 5z" fill="#e88080" />
        <path d="M1 8c4 0 6-2 8-6l6-1-4 5c1 3-2 4-4 8-1-3-2-5-6-6z" fill="#fff" />
      </svg>
      <nav className="flex h-full">
        {menus.map((m) => (
          <button key={m} className={m.length > 2 ? "w-[85px]" : "w-[43px]"}>
            {m}
          </button>
        ))}
        <button className="ml-[15px] w-10 border-x border-[#909090] bg-[#f8f8f8] text-[#ff0000]">市场</button>
      </nav>
      <div className="flex-1 text-center text-[#ff0000]">通达信金融终端 证券</div>
      <div className="flex items-center gap-[2px] pr-1">
        {["行情", "资讯", "交易", "服务"].map((b) => (
          <button key={b} className="h-[19px] w-[35px] border border-[#a0a0a0] bg-linear-to-b from-[#ececec] to-[#cccccc] leading-none">
            {b}
          </button>
        ))}
        {[
          { name: "最小化", d: "M6 13h9" },
          { name: "还原", d: "M8 8V6h7v6h-2M6 9h7v6H6z" },
          { name: "关闭窗口", d: "M7 6l7 9M14 6l-7 9" },
        ].map((b) => (
          <button key={b.name} aria-label={b.name}>
            <svg className="size-[21px]" viewBox="0 0 21 21" fill="none" stroke="#707070">
              <circle cx="10.5" cy="10.5" r="9.5" fill="#e8e8e8" stroke="#909090" strokeWidth="1.5" />
              <path d={b.d} strokeWidth="2" />
            </svg>
          </button>
        ))}
      </div>
    </header>
  );
}

function PeriodBar() {
  return (
    <div className="flex h-[21px] items-stretch border-b border-[#b00000] leading-none">
      <button aria-label="侧栏" className="flex w-6 items-center justify-center border-x border-[#b00000]">
        <PanelIcon />
      </button>
      <div className="flex flex-1 items-center gap-[9px] pl-1">
        {periods.map((p) => (
          <button key={p} className={p === "30分钟" ? "text-[#00ffff]" : ""}>
            {p}
          </button>
        ))}
      </div>
      {chartTools.map((t) => (
        <button key={t} className="w-[35px] border-l border-[#b00000] whitespace-nowrap">
          {t}
        </button>
      ))}
    </div>
  );
}

function TimeAxis() {
  return (
    <div className="flex h-4 border-t border-[#b00000] leading-none">
      <svg className="block h-[15px] min-w-0 flex-1" viewBox="0 0 1389 15" preserveAspectRatio="none">
        <text x="1" y="12" fontSize="12" fill={RED}>06月18日</text>
        {timeMarks.map((m) => (
          <g key={m.x}>
            <path d={`M${m.x + 0.5} 0v15M${m.x + 17.5} 0v2M${m.x + 34.5} 0v2M${m.x + 51.5} 0v2`} stroke={LINE} />
            <text x={m.x + 1} y="12" fontSize="12" fill={RED}>{m.label}</text>
          </g>
        ))}
        <rect x="1366" width="15" height="15" fill="#000080" />
        <path d="M1381.5 0v15" stroke={LINE} />
        <text x="1367" y="11" fontSize="12" fill="#c0c0c0">--</text>
      </svg>
      <button className="w-[51px] border-l border-[#b00000]">30分钟</button>
    </div>
  );
}

function IndicatorBar() {
  return (
    <div className="flex h-[17px] border-t border-[#b00000] leading-none">
      <div className="flex flex-1">
        {indicators.map((name) => (
          <button key={name} className={`border-r border-[#b00000] px-[3px] ${name === "MACD" ? "text-[#00ffff]" : ""}`}>
            {name}
          </button>
        ))}
      </div>
      <button className="w-[30px] border-l border-[#b00000]">模板</button>
      <button className="w-[25px] border-l border-[#b00000]">+</button>
      <button className="w-[26px] border-l border-[#b00000]">−</button>
    </div>
  );
}

function StatusLight({ red }: { red: number }) {
  return (
    <svg className="h-4 w-[50px]" viewBox="0 0 50 16">
      <rect x="0.5" y="0.5" width="49" height="6" fill="#f0f0f0" stroke="#fff" />
      <rect x={red} y="1" width="7" height="5" fill="#f00" />
      <rect x={red + 8} y="1" width="10" height="5" fill="#008000" />
      <path d="M3 9.5h46M3 13.5h46" stroke="#008000" strokeWidth="2" strokeDasharray="6 2" />
    </svg>
  );
}

function StatusBar() {
  return (
    <footer className="flex h-[21px] items-center border-t border-white bg-[#f0f0f0] text-xs leading-none text-black">
      {quotes.map(([name, price, change, percent, amount]) => (
        <div key={name} className="grid w-[220px] grid-cols-[24px_50px_40px_47px_45px] items-center">
          <span>{name}</span>
          <span className="text-right font-bold text-[#ff0000]">{price}</span>
          <span className="text-right font-bold text-[#ff0000]">{change}</span>
          <span className="text-right font-bold text-[#ff0000]">{percent}</span>
          <span className="text-right">{amount}</span>
        </div>
      ))}
      <div className="flex h-5 items-center gap-px border-x border-[#a0a0a0] px-[3px]">
        <StatusLight red={16} />
        <StatusLight red={17} />
      </div>
      <span className="pl-1">深圳双线主站2</span>
    </footer>
  );
}

export default function App() {
  return (
    <div className="relative flex min-h-screen flex-col bg-black font-['Liberation_Sans','Noto_Sans_CJK_SC',sans-serif] text-xs text-[#c0c0c0]">
      <TopBar />
      <div className="flex">
        <main className="min-w-0 flex-1">
          <PeriodBar />
          <section className="flex">
            <div className="min-w-0 flex-1">
              <div className="flex h-[18px] items-center gap-[5px] pr-[3px] pl-[2px] leading-none">
                <h2>证券(30分钟.前复权)</h2>
                <Chevron />
                <span className="flex-1" />
                <svg className="mr-1 h-3 w-[10px]" viewBox="0 0 10 12">
                  <path d="M5 1.5L9 6l-4 4.5L1 6z" fill="none" stroke="#808080" />
                </svg>
                <PanelIcon />
              </div>
              <PriceChart />
            </div>
            <div className="border-l border-[#b00000]">
              <PriceAxis />
            </div>
          </section>
          <section className="flex border-t border-[#b00000]">
            <div className="min-w-0 flex-1">
              <div className="flex h-[18px] items-center gap-1 pb-[2px] pl-[2px] leading-none">
                <Chevron />
                <h2>VOL-TDX(5,40)</h2>
                <span className="text-white">VVOL: 461201.00</span>
                <span className="ml-[6px] text-[#ffff00]">VOLUME: 461201.00</span>
                <span className="text-[#ffff00]">MA5: 276461.59</span>
                <span className="text-[#ff00ff]">MA40: 404468.31</span>
              </div>
              <VolumeChart />
            </div>
            <div className="border-l border-[#b00000]">
              <VolumeAxis />
            </div>
          </section>
          <section className="flex border-t border-[#b00000]">
            <div className="min-w-0 flex-1">
              <div className="flex h-[18px] items-center gap-1 pb-[2px] pl-[2px] leading-none">
                <Chevron />
                <h2>MACD(12,26,9)</h2>
                <span className="text-white">DIF: 3.93</span>
                <span className="text-[#ffff00]">DEA: 4.06</span>
                <span className="text-[#ff00ff]">MACD: -0.27</span>
              </div>
              <MacdChart />
            </div>
            <div className="border-l border-[#b00000]">
              <MacdAxis />
            </div>
          </section>
          <TimeAxis />
          <IndicatorBar />
          <div className="flex h-[18px] items-stretch border-t border-[#b00000] leading-none">
            <button className="border-r border-[#b00000] px-[3px]">扩展∧</button>
            <button className="border-r border-[#b00000] px-1">关联报价</button>
            <span className="flex-1" />
            <a href="#card" className="flex w-[109px] items-center border-l border-[#b00000]">专业版月卡优惠专享</a>
          </div>
        </main>
        <Sidebar />
      </div>
      <div className="border-t border-[#b00000]">
        <StatusBar />
      </div>
      <div className="flex-1 bg-[#1c1e2a]" />
      <TrendArrows />
      <DrawingTools />
      <ImeBar />
    </div>
  );
}
